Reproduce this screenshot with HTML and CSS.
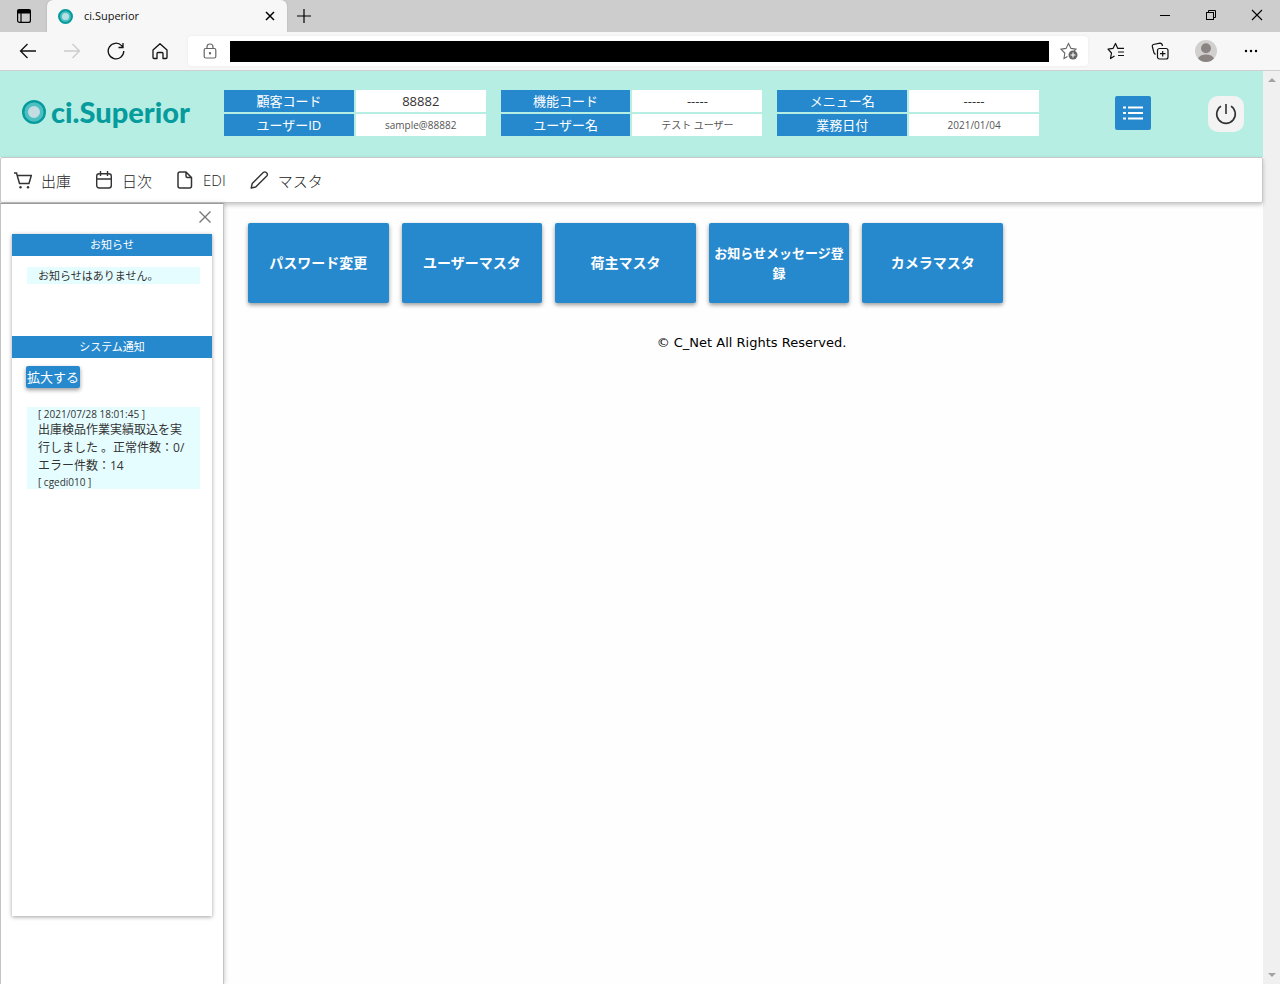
FILE: index.html
```html
<!DOCTYPE html>
<html lang="ja">
<head>
<meta charset="utf-8">
<title>ci.Superior</title>
<link rel="stylesheet" href="styles.css">
</head>
<body>
<div class="tabbar">
  <button class="tab-actions" aria-label="タブ操作"><svg width="16" height="16" viewBox="0 0 16 16" fill="none" stroke="#000" stroke-width="1.2"><rect x="1.6" y="1.6" width="12.8" height="12.8" rx="2"/><path d="M5 5v9"/><path d="M2 2h12v3H2z" fill="#000"/></svg></button>
  <div class="tab">
    <svg width="15" height="15" viewBox="0 0 34 34"><circle cx="17" cy="17" r="14" fill="#b8e0e2" stroke="#079b9e" stroke-width="6"/><circle cx="17" cy="17" r="10" fill="none" stroke="#4cbfc0" stroke-width="4"/></svg>
    <span class="tab-title">ci.Superior</span>
    <button aria-label="閉じる"><svg width="10" height="10" viewBox="0 0 10 10" stroke="#000" stroke-width="1.5"><path d="M1 1l8 8M9 1l-8 8"/></svg></button>
  </div>
  <button class="new-tab" aria-label="新しいタブ"><svg width="16" height="16" viewBox="0 0 16 16" stroke="#000" stroke-width="1.2"><path d="M8 1v14M1 8h14"/></svg></button>
  <div class="window-controls">
    <button aria-label="最小化"><svg width="12" height="12" viewBox="0 0 12 12" stroke="#000"><path d="M1 6.5h10"/></svg></button>
    <button aria-label="元に戻す"><svg width="12" height="12" viewBox="0 0 12 12" fill="none" stroke="#000"><rect x="1.5" y="3.5" width="7" height="7"/><path d="M3.500 3.500v-2h7v7h-2"/></svg></button>
    <button aria-label="ウィンドウを閉じる"><svg width="12" height="12" viewBox="0 0 12 12" stroke="#000" stroke-width="1.100"><path d="M1 1l10 10M11 1L1 11"/></svg></button>
  </div>
</div>
<div class="toolbar">
  <div class="nav-buttons">
    <button aria-label="戻る"><svg width="18" height="18" viewBox="0 0 18 18" fill="none" stroke="#111" stroke-width="1.3"><path d="M17 9H1.500M8.500 2l-7 7 7 7"/></svg></button>
    <button aria-label="進む"><svg width="18" height="18" viewBox="0 0 18 18" fill="none" stroke="#ccc" stroke-width="1.3"><path d="M1 9h15.500M9.500 2l7 7-7 7"/></svg></button>
    <button aria-label="更新"><svg width="18" height="18" viewBox="0 0 18 18" fill="none" stroke="#111" stroke-width="1.300"><path d="M16.800 9A7.800 7.800 0 1 1 14.600 3.600L15.800 5M16 1v4.500h-4.500"/></svg></button>
    <button aria-label="ホーム"><svg width="18" height="18" viewBox="0 0 18 18" fill="none" stroke="#111" stroke-width="1.300" stroke-linejoin="round"><path d="M2 8l7-6.300L16 8v7.500q0 1-1 1h-3V11.500q0-1-1-1H7q-1 0-1 1v5H3q-1 0-1-1z"/></svg></button>
  </div>
  <div class="address">
    <svg width="14" height="16" viewBox="0 0 14 16" fill="none" stroke="#666" stroke-width="1.200"><rect x="1.200" y="5.500" width="11.600" height="9.500" rx="1.500"/><path d="M4 5.500V4q0-3 3-3t3 3v1.500"/><circle cx="7" cy="10.300" r=".6" fill="#666"/></svg>
    <input type="text" aria-label="アドレス">
    <button aria-label="お気に入りに追加"><svg width="18" height="18" viewBox="0 0 18 18" fill="none" stroke="#666" stroke-width="1.100"><path d="M7.500 14.500L4 16.500 4.800 11 1 7.200l5-.8L8.500 1.500 11 6.400l5 .8-2 2"/><circle cx="13" cy="13" r="4.500" fill="#666" stroke="none"/><path d="M13 10.500v5M10.500 13h5" stroke="#fff"/></svg></button>
  </div>
  <div class="tools">
    <button aria-label="お気に入り"><svg width="18" height="18" viewBox="0 0 18 18" fill="none" stroke="#111" stroke-width="1.200" stroke-linejoin="round"><path d="M7.500 14L3.500 16.500 4.500 11 1 7.200l5-.8L8.500 1.500 10.800 6.400H17M11 10h6M11 13.500h6"/></svg></button>
    <button aria-label="コレクション"><svg width="18" height="18" viewBox="0 0 18 18" fill="none" stroke="#111" stroke-width="1.200"><rect x="6.500" y="6.500" width="10.500" height="10.500" rx="2"/><path d="M11.700 9v5.500M9 11.700h5.500M4.500 12.500L3 11 1.300 4.500q-.3-1.500 1-2L9 1.200q2 0 2.500 2.800"/></svg></button>
    <button aria-label="プロフィール"><svg width="22" height="22" viewBox="0 0 22 22"><circle cx="11" cy="11" r="11" fill="#d2d0ce"/><circle cx="11" cy="8.300" r="5" fill="#8a8583"/><path d="M3 18.500q2-4 8-4t8 4Q15.500 22 11 22t-8-3.500z" fill="#8a8583"/></svg></button>
    <button aria-label="設定など"><svg width="16" height="16" viewBox="0 0 16 16"><circle cx="3" cy="8" r="1.200"/><circle cx="8" cy="8" r="1.200"/><circle cx="13" cy="8" r="1.200"/></svg></button>
  </div>
</div>
<div class="viewport">
  <div class="page">
    <header class="header">
      <a class="logo" href="#"><svg width="24" height="24" viewBox="0 0 34 34"><circle cx="17" cy="17" r="15" fill="#c4dde3" stroke="#079b9e" stroke-width="4"/><circle cx="17" cy="17" r="11" fill="none" stroke="#4cbfc0" stroke-width="5"/></svg><span>ci.Superior</span></a>
      <div class="info">
        <dl><dt>顧客コード</dt><dd>88882</dd><dt>ユーザーID</dt><dd class="small">sample@88882</dd></dl>
        <dl><dt>機能コード</dt><dd>-----</dd><dt>ユーザー名</dt><dd class="small">テスト ユーザー</dd></dl>
        <dl><dt>メニュー名</dt><dd>-----</dd><dt>業務日付</dt><dd class="small">2021/01/04</dd></dl>
      </div>
      <div class="actions">
        <button class="menu-button" aria-label="メニュー"><svg width="20" height="16" viewBox="0 0 20 16" stroke="#fff" stroke-width="2"><path d="M0 2.500h3M5 2.500h15M0 8h3M5 8h15M0 13.500h3M5 13.500h15"/></svg></button>
        <button class="power-button" aria-label="ログアウト"><svg width="22" height="22" viewBox="0 0 22 22" fill="none" stroke="#333" stroke-width="1.600"><path d="M11 1v10M6 3.200a9.300 9.300 0 1 0 10 0"/></svg></button>
      </div>
    </header>
    <nav class="menu">
      <a href="#"><svg width="18" height="18" viewBox="0 0 18 18" fill="none" stroke="#333" stroke-width="1.500"><path d="M0 2h2.500l3 10.500h9.500L17.300 4.500H3.500"/><circle cx="6.500" cy="16.300" r="1.200" fill="#333" stroke="none"/><circle cx="14" cy="16.300" r="1.200" fill="#333" stroke="none"/></svg>出庫</a>
      <a href="#"><svg width="18" height="18" viewBox="0 0 18 18" fill="none" stroke="#333" stroke-width="1.400"><rect x="1.700" y="2.700" width="14.600" height="14.300" rx="2.500"/><path d="M2 8h14M5.500 0v5M12.500 0v5"/></svg>日次</a>
      <a href="#"><svg width="18" height="18" viewBox="0 0 18 18" fill="none" stroke="#333" stroke-width="1.500" stroke-linejoin="round"><path d="M4 1h6l5.500 5.500V15q0 2-2 2H4q-2 0-2-2V3q0-2 2-2zM10 1v4q0 1.500 1.500 1.500h4"/></svg>EDI</a>
      <a href="#"><svg width="19" height="18" viewBox="0 0 19 18" fill="none" stroke="#333" stroke-width="1.400" stroke-linejoin="round"><path d="M1.200 17l1-4.500L13.500 1.300q1.500-1 3 .4t.5 3L5.700 16z"/></svg>マスタ</a>
    </nav>
    <div class="body">
      <aside class="sidebar">
        <button class="close" aria-label="閉じる"><svg width="12" height="12" viewBox="0 0 12 12" stroke="#777" stroke-width="1.400"><path d="M.5.5l11 11M11.500.5l-11 11"/></svg></button>
        <div class="panel">
          <h2>お知らせ</h2>
          <div class="news"><p class="notice">お知らせはありません。</p></div>
          <h2>システム通知</h2>
          <div class="system">
            <button class="expand">拡大する</button>
            <div class="notice"><small>[ 2021/07/28 18:01:45 ]</small><p>出庫検品作業実績取込を実行しました 。正常件数：0/エラー件数：14</p><small>[ cgedi010 ]</small></div>
          </div>
        </div>
      </aside>
      <main class="main">
        <div class="tiles">
          <button>パスワード変更</button>
          <button>ユーザーマスタ</button>
          <button>荷主マスタ</button>
          <button class="long">お知らせメッセージ登録</button>
          <button>カメラマスタ</button>
        </div>
        <footer>© C_Net All Rights Reserved.</footer>
      </main>
    </div>
  </div>
  <div class="scrollbar">
    <svg width="8" height="4" viewBox="0 0 8 4"><path d="M0 4l4-4 4 4z" fill="#a3a3a3"/></svg>
    <svg width="8" height="4" viewBox="0 0 8 4"><path d="M0 0l4 4 4-4z" fill="#a3a3a3"/></svg>
  </div>
</div>
</body>
</html>
```
FILE: styles.css
```css
* { box-sizing: border-box; }
body {
  margin: 0;
  height: 100vh;
  display: flex;
  flex-direction: column;
  overflow: hidden;
  background: #fff;
  color: #333;
  font-family: "Open Sans", "Noto Sans CJK JP", sans-serif;
}
button { border: 0; padding: 0; margin: 0; background: none; font: inherit; color: inherit; display: flex; align-items: center; justify-content: center; }
svg { display: block; flex: none; }
a { color: inherit; text-decoration: none; }
h2, p, dl, dd { margin: 0; font-weight: normal; }

.tabbar { flex: none; height: 32px; display: flex; background: #cdcdcd; }
.tab-actions { width: 47px; }
.tab { width: 240px; display: flex; align-items: center; padding: 0 12px 0 11px; background: #f7f7f7; border-radius: 6px 6px 0 0; box-shadow: 0 0 2px #aaa; }
.tab-title { flex: 1; padding-left: 11px; font-size: 11px; line-height: 16px; color: #111; }
.new-tab { width: 34px; }
.window-controls { margin-left: auto; display: flex; padding-bottom: 3px; }
.window-controls button { width: 46px; }

.toolbar { flex: none; height: 39px; display: flex; align-items: center; background: #f7f7f7; border-bottom: 1px solid #cfcfcf; position: relative; }
.nav-buttons { display: flex; gap: 26px; padding: 0 19px; }
.address { flex: 1; height: 30px; display: flex; align-items: center; padding: 0 10px 0 15px; background: #fff; border-radius: 4px; box-shadow: 0 0 3px #e8e8e8; }
.address input { flex: 1; height: 21px; margin: 0 11px 0 13px; padding: 0; border: 0; border-radius: 0; background: #000; color: #000; }
.tools { display: flex; align-items: center; gap: 26px; padding: 0 21px 0 19px; }

.viewport { flex: 1; min-height: 0; display: flex; }
.scrollbar { width: 17px; background: #f0f0f0; display: flex; flex-direction: column; justify-content: space-between; align-items: center; padding: 7px 0; }
.page { flex: 1; min-width: 0; display: flex; flex-direction: column; background: #fefefe; }

.header { flex: none; display: grid; grid-template-columns: 224px minmax(0, 815px) 1fr; align-items: start; padding: 19px 0 21px; background: #b6eee4; }
.logo { display: flex; align-items: center; gap: 5px; padding: 6px 0 0 22px; font-family: Lato, sans-serif; font-weight: 900; font-size: 29px; line-height: 32px; color: #069b9d; }
.info { display: grid; grid-template-columns: repeat(3, 1fr); gap: 15px; }
.info dl { display: grid; grid-template-columns: 1fr 1fr; gap: 2px; text-align: center; font-size: 13px; line-height: 22px; }
.info dt { background: #2789cd; color: #fff; }
.info dd { background: #fff; }
.info .small { font-size: 10px; color: #555; }
.actions { display: flex; align-items: flex-start; justify-content: flex-end; gap: 57px; padding: 6px 19px 0 0; }
.menu-button { width: 36px; height: 34px; border-radius: 2px; background: #2789cd; }
.power-button { width: 36px; height: 36px; border-radius: 10px; background: #f3f3f3; }

.menu { flex: none; position: relative; display: flex; gap: 24px; height: 46px; padding: 0 13px; background: #fff; border: 1px solid #c8c8c8; border-radius: 2px; box-shadow: 0 2px 4px rgba(0, 0, 0, .22); font-size: 15px; font-weight: 300; color: #222; }
.menu a { display: flex; align-items: center; gap: 9px; }

.body { flex: 1; min-height: 0; display: flex; }
.sidebar { position: relative; flex: none; width: 224px; display: flex; flex-direction: column; padding: 6px 11px 68px; background: #fff; border: 1px solid #c4c4c4; border-width: 1px 1px 0; border-top-color: #999; box-shadow: 1px 0 4px rgba(0, 0, 0, .18); }
.close { align-self: flex-end; width: 14px; height: 13px; margin-bottom: 11px; }
.panel { flex: 1; background: #fff; box-shadow: 0 1px 4px rgba(0, 0, 0, .38); }
.panel h2 { background: #2789cd; color: #fff; text-align: center; font-size: 11px; line-height: 22px; }
.news { height: 80px; padding: 11px 12px 0 15px; }
.notice { padding: 0 11px; background: #e6fdff; font-size: 12px; line-height: 18px; }
.news .notice { font-size: 11px; line-height: 17px; }
.notice small { display: block; font-size: 10px; line-height: 14px; }
.system { padding: 8px 12px 0 15px; }
.expand { height: 22px; margin: 0 0 19px -1px; padding: 0 1px; border-radius: 2px; background: #2789cd; color: #fff; font-size: 13px; line-height: 20px; white-space: nowrap; box-shadow: 0 2px 4px rgba(0, 0, 0, .4); }

.main { flex: 1; min-width: 0; margin-left: 16px; padding: 20px 8px 0; }
.tiles { display: grid; grid-template-columns: repeat(5, 1fr); gap: 13px; max-width: 755px; }
.tiles button { height: 80px; padding: 0 4px; border-radius: 2px; background: #2789cd; color: #fff; font-weight: bold; font-size: 14px; line-height: 20px; box-shadow: 0 2px 4px rgba(0, 0, 0, .4); }
.tiles .long { font-size: 13px; }
footer { margin-top: 31px; text-align: center; font-family: "DejaVu Sans", sans-serif; font-size: 13px; line-height: 18px; color: #000; }
```
